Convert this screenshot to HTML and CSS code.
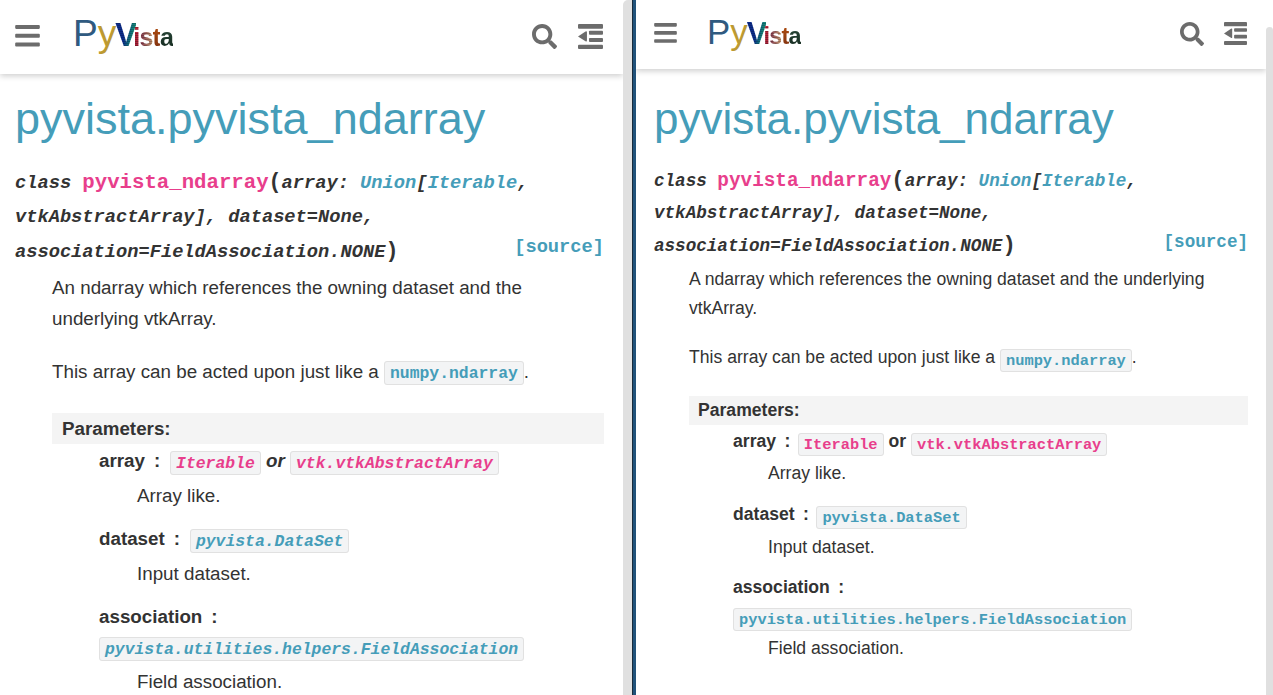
FILE: index.html
```html
<!DOCTYPE html>
<html lang="en">
<head>
<meta charset="utf-8">
<title>pyvista.pyvista_ndarray</title>
<link rel="stylesheet" href="styles.css">
</head>
<body>
<div class="app">
  <section class="pane pane-left">
    <header class="topbar">
      <svg class="icon icon-bars" viewBox="0 0 448 400"><path d="M16 72h416c8.800 0 16-7.200 16-16V16c0-8.800-7.200-16-16-16H16C7.200 0 0 7.200 0 16v40c0 8.800 7.200 16 16 16zm0 160h416c8.800 0 16-7.200 16-16v-40c0-8.800-7.200-16-16-16H16c-8.800 0-16 7.200-16 16v40c0 8.800 7.200 16 16 16zm0 160h416c8.800 0 16-7.200 16-16v-40c0-8.800-7.200-16-16-16H16c-8.800 0-16 7.200-16 16v40c0 8.800 7.200 16 16 16z"/></svg>
      <div class="logo"><span class="l-p">P</span><span class="l-y">y</span><span class="l-v">V</span><span class="l-i">i</span><span class="l-s">s</span><span class="l-t">t</span><span class="l-a">a</span></div>
      <div class="tools">
        <svg class="icon icon-search" viewBox="0 0 512 512"><path d="M505 442.700L405.300 343c-4.500-4.500-10.600-7-17-7H372c27.600-35.300 44-79.700 44-128C416 93.100 322.900 0 208 0S0 93.100 0 208s93.100 208 208 208c48.300 0 92.700-16.400 128-44v16.300c0 6.400 2.500 12.500 7 17l99.700 99.700c9.400 9.400 24.600 9.400 33.900 0l28.300-28.300c9.400-9.400 9.400-24.600.1-34zM208 336c-70.700 0-128-57.200-128-128 0-70.700 57.200-128 128-128 70.700 0 128 57.200 128 128 0 70.700-57.200 128-128 128z"/></svg>
        <svg class="icon icon-outdent" viewBox="0 0 448 448"><rect x="0" y="0" width="448" height="84" rx="18"/><rect x="197" y="120" width="251" height="71" rx="16"/><rect x="197" y="250" width="251" height="72" rx="16"/><rect x="0" y="370" width="448" height="78" rx="18"/><path d="M0 222 L135 133 Q160 120 160 146 V296 Q160 322 135 309 Z"/></svg>
      </div>
    </header>
    <main class="doc">
      <h1 class="title">pyvista.pyvista_ndarray</h1>
      <div class="sig">
        <em class="kw">class </em><span class="name">pyvista_ndarray</span><span class="paren">(</span><em>array: <a class="link">Union</a>[<a class="link">Iterable</a>, vtkAbstractArray], dataset=None, association=FieldAssociation.NONE</em><span class="paren">)</span><a class="source">[source]</a>
      </div>
      <div class="body">
        <p class="para">An ndarray which references the owning dataset and the underlying vtkArray.</p>
        <p class="para">This array can be acted upon just like a <code class="code code-link">numpy.ndarray</code>.</p>
        <div class="field-head">Parameters:</div>
        <dl class="params">
          <dt><strong>array</strong> <span class="colon">:</span> <em><code class="code code-pink">Iterable</code> or <code class="code code-pink">vtk.vtkAbstractArray</code></em></dt>
          <dd>Array like.</dd>
          <dt><strong>dataset</strong> <span class="colon">:</span> <em><code class="code code-link">pyvista.DataSet</code></em></dt>
          <dd>Input dataset.</dd>
          <dt><strong>association</strong> <span class="colon">:</span> <em><code class="code code-link">pyvista.utilities.helpers.FieldAssociation</code></em></dt>
          <dd>Field association.</dd>
        </dl>
      </div>
    </main>
  </section>
  <div class="scrollbar-left"></div>
  <div class="divider"></div>
  <section class="pane pane-right">
    <header class="topbar">
      <svg class="icon icon-bars" viewBox="0 0 448 400"><path d="M16 72h416c8.800 0 16-7.200 16-16V16c0-8.800-7.200-16-16-16H16C7.200 0 0 7.200 0 16v40c0 8.800 7.200 16 16 16zm0 160h416c8.800 0 16-7.200 16-16v-40c0-8.800-7.200-16-16-16H16c-8.800 0-16 7.200-16 16v40c0 8.800 7.200 16 16 16zm0 160h416c8.800 0 16-7.200 16-16v-40c0-8.800-7.200-16-16-16H16c-8.800 0-16 7.200-16 16v40c0 8.800 7.200 16 16 16z"/></svg>
      <div class="logo"><span class="l-p">P</span><span class="l-y">y</span><span class="l-v">V</span><span class="l-i">i</span><span class="l-s">s</span><span class="l-t">t</span><span class="l-a">a</span></div>
      <div class="tools">
        <svg class="icon icon-search" viewBox="0 0 512 512"><path d="M505 442.700L405.300 343c-4.500-4.500-10.600-7-17-7H372c27.600-35.300 44-79.700 44-128C416 93.100 322.900 0 208 0S0 93.100 0 208s93.100 208 208 208c48.300 0 92.700-16.400 128-44v16.300c0 6.400 2.500 12.500 7 17l99.700 99.700c9.400 9.400 24.600 9.400 33.900 0l28.300-28.300c9.400-9.400 9.400-24.600.1-34zM208 336c-70.700 0-128-57.200-128-128 0-70.700 57.200-128 128-128 70.700 0 128 57.200 128 128 0 70.700-57.200 128-128 128z"/></svg>
        <svg class="icon icon-outdent" viewBox="0 0 448 448"><rect x="0" y="0" width="448" height="84" rx="18"/><rect x="197" y="120" width="251" height="71" rx="16"/><rect x="197" y="250" width="251" height="72" rx="16"/><rect x="0" y="370" width="448" height="78" rx="18"/><path d="M0 222 L135 133 Q160 120 160 146 V296 Q160 322 135 309 Z"/></svg>
      </div>
    </header>
    <main class="doc">
      <h1 class="title">pyvista.pyvista_ndarray</h1>
      <div class="sig">
        <em class="kw">class </em><span class="name">pyvista_ndarray</span><span class="paren">(</span><em>array: <a class="link">Union</a>[<a class="link">Iterable</a>, vtkAbstractArray], dataset=None, association=FieldAssociation.NONE</em><span class="paren">)</span><a class="source">[source]</a>
      </div>
      <div class="body">
        <p class="para">A ndarray which references the owning dataset and the underlying vtkArray.</p>
        <p class="para">This array can be acted upon just like a <code class="code code-link">numpy.ndarray</code>.</p>
        <div class="field-head">Parameters:</div>
        <dl class="params">
          <dt><strong>array</strong> <span class="colon">:</span> <code class="code code-pink">Iterable</code> <strong>or</strong> <code class="code code-pink">vtk.vtkAbstractArray</code></dt>
          <dd>Array like.</dd>
          <dt><strong>dataset</strong> <span class="colon">:</span> <code class="code code-link">pyvista.DataSet</code></dt>
          <dd>Input dataset.</dd>
          <dt><strong>association</strong> <span class="colon">:</span> <code class="code code-link">pyvista.utilities.helpers.FieldAssociation</code></dt>
          <dd>Field association.</dd>
        </dl>
      </div>
    </main>
  </section>
  <div class="scrollbar-right"><div class="thumb"></div></div>
</div>
</body>
</html>
```
FILE: styles.css
```css
* { box-sizing: border-box; }
html, body { margin: 0; height: 100%; overflow: hidden; background: #fff; }
body { font-family: "Liberation Sans", Arial, sans-serif; color: #333; }
.app { display: flex; height: 695px; width: 1273px; overflow: hidden; }
.pane { display: flex; flex-direction: column; height: 695px; overflow: hidden; background: #fff; }
.pane-left {
  width: 623px; font-size: 18.8px; line-height: 30.7px;
  --head: 74px; --pad-l: 15px; --pad-r: 19px; --tool-r: 20px; --logo: 32px; --logo-gap: 33px; --logo-top: -7px; --bars: 25px; --search: 25px; --outdent: 25px; --tool-gap: 21px;
  --title: 45px; --title-top: 16px; --title-lh: 58px;
  --sig-name: 20.7px; --paren: 21.6px; --sig: 18.72px; --sig-lh: 34.2px; --sig-top: 17px; --code: 16.4px; --code-drop: 0; --code-lh: 30.7px;
  --body-top: 3.6px; --body-ind: 37px; --para-gap: 22px; --source-lh: 26px;
  --head-top: 24px; --head-h: 31px; --head-pad: 10px; --params-top: 2px;
  --dt-ind: 47px; --dd-ind: 38px; --dd-gap: 12.4px; --dd-top: 2px; --colon-r: .25em;
}
.pane-right {
  width: 630px; font-size: 17.6px; line-height: 28.8px;
  --head: 69px; --pad-l: 18px; --pad-r: 18px; --tool-r: 19px; --logo: 30px; --logo-gap: 30px; --logo-top: -5px; --bars: 23px; --search: 24px; --outdent: 23px; --tool-gap: 20px;
  --title: 44px; --title-top: 21px; --title-lh: 58px;
  --sig-name: 19.33px; --paren: 22.2px; --sig: 17.6px; --sig-lh: 32.4px; --sig-top: 17px; --code: 15.36px; --code-drop: -1.5px; --code-lh: 1;
  --body-top: 3px; --body-ind: 35px; --para-gap: 20px; --source-lh: 24px;
  --head-top: 24px; --head-h: 29px; --head-pad: 9px; --params-top: 2px;
  --dt-ind: 44px; --dd-ind: 35px; --dd-gap: 11.5px; --dd-top: 4px; --colon-r: .15em;
}
.topbar {
  flex: none; display: flex; align-items: center; height: var(--head);
  padding: 0 var(--tool-r) 2px var(--pad-l);
  box-shadow: 0 2px 6px rgba(0, 0, 0, .2);
  position: relative;
}
.icon { display: block; fill: #6c6c6c; flex: none; }
.icon-bars { width: var(--bars); height: calc(var(--bars) * .88); }
.icon-search { width: var(--search); height: var(--search); }
.icon-outdent { width: var(--outdent); height: var(--outdent); }
.tools { margin-left: auto; display: flex; align-items: center; gap: var(--tool-gap); }
.logo {
  margin-left: var(--logo-gap); margin-top: var(--logo-top);
  font-size: var(--logo); line-height: 1; display: flex; align-items: baseline; white-space: nowrap;
  height: 1.1em;
}
.logo span { display: block; }
.l-p { color: #2f5a80; font-size: 1.16em; }
.l-y { color: #bd9a31; font-size: 1.16em; margin-right: -1px; }
.l-v, .l-i, .l-s, .l-t, .l-a { font-weight: 700; -webkit-background-clip: text; background-clip: text; color: transparent; }
.l-v { font-size: 1.02em; letter-spacing: -.04em; margin-right: -.08em; background-image: repeating-linear-gradient(0deg, rgba(0, 0, 0, .18) 0 1px, transparent 1px 2px), linear-gradient(100deg, #0c2c8c 0%, #0c2c8c 45%, #127a7c 70%, #2ba07a 100%); }
.l-i, .l-s, .l-t, .l-a { font-size: .78em; letter-spacing: -.03em; }
.l-i { background-image: repeating-linear-gradient(0deg, rgba(0, 0, 0, .25) 0 1px, transparent 1px 2px), linear-gradient(#c22a3c, #a51f38); }
.l-s { background-image: repeating-linear-gradient(0deg, rgba(0, 0, 0, .2) 0 1px, transparent 1px 2px), linear-gradient(90deg, #7c2b48, #c69a70); }
.l-t { background-image: linear-gradient(#b14f10, #7d2f10); }
.l-a { background-image: linear-gradient(#2a4a3a, #15291f); }

.doc { flex: 1; min-height: 0; padding: 0 var(--pad-r) 0 var(--pad-l); }
.title {
  margin: var(--title-top) 0 0; font-size: var(--title); line-height: var(--title-lh);
  font-weight: 400; color: #459db9;
}
.sig {
  margin-top: var(--sig-top); font-family: "Liberation Mono", monospace; font-weight: 700;
  font-size: var(--sig); line-height: var(--sig-lh);
}
.sig em { font-style: italic; }
.kw { white-space: pre; }
.name { color: #e83e8c; font-size: var(--sig-name); }
.paren { font-size: var(--paren); }
.link { color: #459db9; }
.source { float: right; color: #459db9; line-height: var(--source-lh); }
.body { margin: var(--body-top) 0 0 var(--body-ind); clear: both; }
.para { margin: 0 0 var(--para-gap); }
.code {
  font-family: "Liberation Mono", monospace; font-weight: 700; font-size: var(--code);
  background: #f3f4f5; border: 1px solid #e1e1e1; border-radius: 3px; padding: 1.5px 5px;
  vertical-align: var(--code-drop); line-height: var(--code-lh);
}
.code-link { color: #459db9; }
.code-pink { color: #e83e8c; }
.field-head {
  margin-top: var(--head-top); height: var(--head-h); line-height: var(--head-h);
  padding-left: var(--head-pad); background: #f4f4f4; font-weight: 700;
}
.params { margin: var(--params-top) 0 0 var(--dt-ind); }
.params dt { font-weight: 700; }
.colon { margin: 0 var(--colon-r) 0 .2em; }
.params dd { margin: var(--dd-top) 0 var(--dd-gap) var(--dd-ind); }

.scrollbar-left { flex: none; width: 9px; height: 695px; background: #e0e0e0; border-radius: 5px 0 0 0; }
.divider { flex: none; width: 4px; height: 695px; background: #21527a; border-left: 1px solid #1a2c3c; }
.scrollbar-right { flex: none; width: 7px; height: 695px; padding-top: 27px; background: #fff; }
.thumb { height: 100%; background: #e0e0e0; border-radius: 4px 4px 0 0; }
```
